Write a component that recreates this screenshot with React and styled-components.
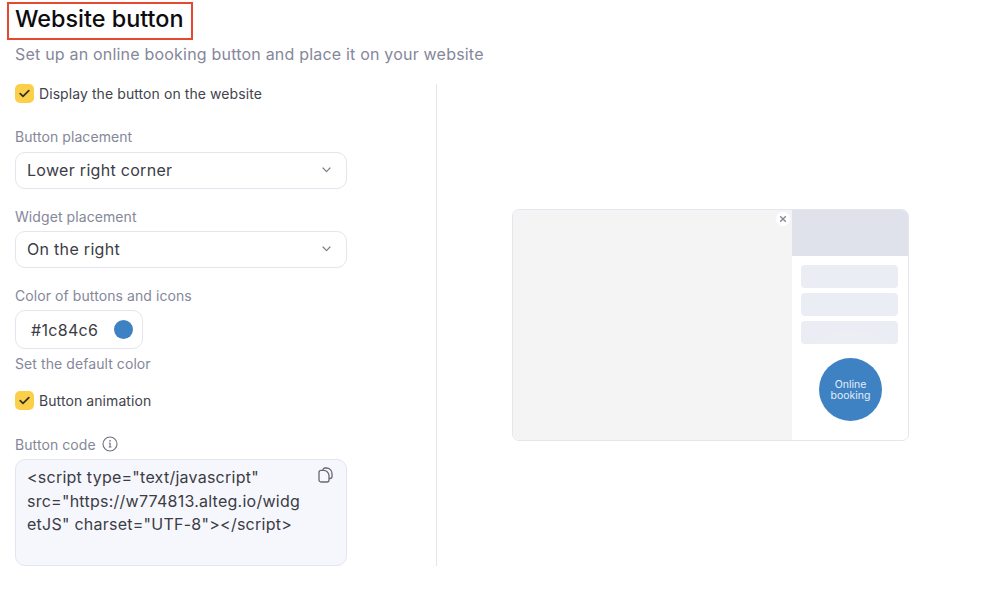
import React from "react";
import styled, { createGlobalStyle } from "styled-components";

const GlobalStyle = createGlobalStyle`
  html, body {
    margin: 0;
    padding: 0;
    background: #fff;
    font-family: Inter, "Liberation Sans", sans-serif;
  }
`;

const Page = styled.div`
  width: 1000px;
  height: 593px;
  padding: 2px 0 0 15px;
  box-sizing: border-box;
  overflow: hidden;
`;

const TitleBox = styled.div`
  width: 186px;
  height: 38px;
  margin-left: -8px;
  padding: 0 0 5px 6px;
  box-sizing: border-box;
  border: 2px solid #e8472f;
  display: flex;
  align-items: center;
`;

const Title = styled.h1`
  margin: 0;
  font-size: 23.4px;
  font-weight: 500;
  color: #0c0c10;
  white-space: nowrap;
`;

const Subtitle = styled.p`
  margin: 4px 0 0;
  font-size: 16px;
  line-height: 20px;
  letter-spacing: 0.2px;
  color: #85879a;
`;

const Columns = styled.div`
  display: flex;
  margin-top: 20px;
`;

const FormColumn = styled.div`
  width: 332px;
  display: flex;
  flex-direction: column;
`;

const Divider = styled.div`
  width: 1px;
  height: 482px;
  margin-left: 89px;
  background: #e4e5ee;
`;

const PreviewColumn = styled.div`
  margin-left: 75px;
  padding-top: 125px;
`;

const CheckRow = styled.label`
  display: flex;
  align-items: center;
  gap: 5px;
  height: 19px;
  margin-top: ${(props) => props.$top || 0}px;
  font-size: 14px;
  line-height: 17px;
  letter-spacing: 0.08px;
  color: #42434d;
`;

const CheckText = styled.span`
  margin-bottom: 1px;
`;

const CheckBox = styled.span`
  width: 19px;
  height: 19px;
  border-radius: 5px;
  background: #fbcf4a;
  display: flex;
  align-items: center;
  justify-content: center;
`;

const FieldLabel = styled.div`
  display: flex;
  align-items: center;
  gap: 6px;
  height: 18px;
  margin-top: ${(props) => props.$top || 0}px;
  font-size: 14px;
  letter-spacing: 0.08px;
  color: #85879a;
`;

const Select = styled.div`
  height: 37px;
  margin-top: ${(props) => props.$top}px;
  padding: 0 15px 1px 11px;
  box-sizing: border-box;
  border: 1px solid #e4e5ee;
  border-radius: 10px;
  display: flex;
  align-items: center;
  justify-content: space-between;
  font-size: 16px;
  letter-spacing: 0.3px;
  color: #3b3c45;
`;

const ColorInput = styled.div`
  width: 128px;
  height: 39px;
  margin-top: 6px;
  padding: 1px 9px 0 15px;
  box-sizing: border-box;
  border: 1px solid #e4e5ee;
  border-radius: 10px;
  display: flex;
  align-items: center;
  justify-content: space-between;
  font-size: 16px;
  letter-spacing: 0.3px;
  color: #3b3c45;
`;

const Swatch = styled.span`
  width: 19px;
  height: 19px;
  margin-top: -1px;
  border-radius: 50%;
  background: ${(props) => props.$color};
`;

const Hint = styled.div`
  height: 18px;
  margin-top: 6px;
  font-size: 14px;
  letter-spacing: 0.08px;
  color: #85879a;
`;

const CodeBox = styled.div`
  position: relative;
  height: 107px;
  margin-top: 6px;
  padding: 6px 11px 0;
  box-sizing: border-box;
  border: 1px solid #e4e5ee;
  border-radius: 10px;
  background: #f6f7fc;
  font-size: 16px;
  line-height: 23.5px;
  letter-spacing: 0.25px;
  color: #3b3c45;
`;

const CodeLine = styled.div`
  white-space: nowrap;
`;

const CopyButton = styled.span`
  position: absolute;
  top: 7px;
  right: 13px;
  display: flex;
  color: #666873;
`;

const Browser = styled.div`
  width: 397px;
  height: 232px;
  box-sizing: border-box;
  border: 1px solid #e4e5ee;
  border-radius: 7px;
  overflow: hidden;
  display: flex;
`;

const Backdrop = styled.div`
  position: relative;
  flex: 1;
  background: #f4f4f5;
`;

const CloseDot = styled.span`
  position: absolute;
  top: 2px;
  right: 2px;
  width: 14px;
  height: 14px;
  border-radius: 50%;
  background: #fff;
  display: flex;
  align-items: center;
  justify-content: center;
`;

const Widget = styled.div`
  width: 116px;
  background: #fff;
  display: flex;
  flex-direction: column;
`;

const WidgetHeader = styled.div`
  height: 46px;
  background: #dfe2eb;
`;

const WidgetRows = styled.div`
  padding: 9px 10px 0 9px;
  display: flex;
  flex-direction: column;
  gap: 5px;
`;

const WidgetRow = styled.div`
  height: 23px;
  border-radius: 4px;
  background: #eaedf3;
`;

const BookingButton = styled.div`
  width: 63px;
  height: 63px;
  margin: 14px 0 0 27px;
  box-sizing: border-box;
  border-radius: 50%;
  background: #3f82c4;
  box-shadow: 0 0 0 28px rgba(255, 255, 255, 0.1);
  color: #e3edf7;
  font-size: 10.5px;
  line-height: 11px;
  display: flex;
  align-items: center;
  justify-content: center;
  text-align: center;
`;

const Check = () => (
  <svg width="11" height="9" viewBox="0 0 11 9" fill="none">
    <path d="M1.2 4.6 4 7.4 9.8 1.6" stroke="#33301f" strokeWidth="1.7" strokeLinecap="round" strokeLinejoin="round" />
  </svg>
);

const Chevron = () => (
  <svg width="9" height="6" viewBox="0 0 9 6" fill="none">
    <path d="M1 1 4.5 4.6 8 1" stroke="#7b7d88" strokeWidth="1.2" strokeLinecap="round" strokeLinejoin="round" />
  </svg>
);

const InfoIcon = () => (
  <svg width="16" height="16" viewBox="0 0 16 16" fill="none">
    <circle cx="8" cy="8" r="7" stroke="#6f717c" strokeWidth="1.1" />
    <path d="M6.9 7.2H8.1V11M6.8 11H9.4" stroke="#6f717c" strokeWidth="1.1" />
    <circle cx="8" cy="4.9" r="0.8" fill="#6f717c" />
  </svg>
);

const CopyIcon = () => (
  <svg width="15" height="16" viewBox="0 0 15 16" fill="none" stroke="currentColor" strokeWidth="1.3">
    <path d="M5 3.2V3C5 1.9 5.9 1 7 1H8.4C11.5 1 14 3.5 14 6.6V9.5C14 10.6 13.1 11.5 12 11.5H11" />
    <path d="M3 3.4H5.6C8.6 3.4 11 5.8 11 8.8V13C11 14.1 10.1 15 9 15H3C1.9 15 1 14.1 1 13V5.4C1 4.3 1.9 3.4 3 3.4Z" strokeLinejoin="round" />
  </svg>
);

const CloseIcon = () => (
  <svg width="8" height="8" viewBox="0 0 8 8" fill="none">
    <path d="M1.2 1.2 6.8 6.8M6.8 1.2 1.2 6.8" stroke="#858997" strokeWidth="1.4" />
  </svg>
);

export default function App() {
  return (
    <Page>
      <GlobalStyle />
      <TitleBox>
        <Title>Website button</Title>
      </TitleBox>
      <Subtitle>Set up an online booking button and place it on your website</Subtitle>
      <Columns>
        <FormColumn>
          <CheckRow>
            <CheckBox><Check /></CheckBox>
            <CheckText>Display the button on the website</CheckText>
          </CheckRow>
          <FieldLabel $top={24}>Button placement</FieldLabel>
          <Select $top={7}>
            Lower right corner
            <Chevron />
          </Select>
          <FieldLabel $top={18}>Widget placement</FieldLabel>
          <Select $top={6}>
            On the right
            <Chevron />
          </Select>
          <FieldLabel $top={18}>Color of buttons and icons</FieldLabel>
          <ColorInput>
            #1c84c6
            <Swatch $color="#3f82c4" />
          </ColorInput>
          <Hint>Set the default color</Hint>
          <CheckRow $top={18}>
            <CheckBox><Check /></CheckBox>
            <CheckText>Button animation</CheckText>
          </CheckRow>
          <FieldLabel $top={25}>
            Button code
            <InfoIcon />
          </FieldLabel>
          <CodeBox>
            <CodeLine>&lt;script type="text/javascript"</CodeLine>
            <CodeLine>src="https://w774813.alteg.io/widg</CodeLine>
            <CodeLine>etJS" charset="UTF-8"&gt;&lt;/script&gt;</CodeLine>
            <CopyButton><CopyIcon /></CopyButton>
          </CodeBox>
        </FormColumn>
        <Divider />
        <PreviewColumn>
          <Browser>
            <Backdrop>
              <CloseDot><CloseIcon /></CloseDot>
            </Backdrop>
            <Widget>
              <WidgetHeader />
              <WidgetRows>
                <WidgetRow />
                <WidgetRow />
                <WidgetRow />
              </WidgetRows>
              <BookingButton>Online<br />booking</BookingButton>
            </Widget>
          </Browser>
        </PreviewColumn>
      </Columns>
    </Page>
  );
}
